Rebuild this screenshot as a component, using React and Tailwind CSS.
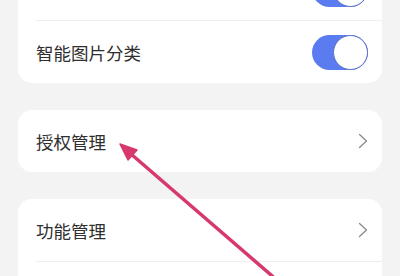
import React from "react";

function Toggle() {
  return (
    <div className="relative w-[56px] h-[35px] rounded-full bg-[#5b7cf1]">
      <div className="absolute right-0 top-0 w-[35px] h-[35px] rounded-full bg-white border-[1.5px] border-[#5d6fc6]" />
    </div>
  );
}

function Chevron() {
  return (
    <svg width="10" height="16" viewBox="0 0 10 16" fill="none">
      <path d="M1.5 1.5 L8.5 8 L1.5 14.5" stroke="#8a8a8a" strokeWidth="1.3" strokeLinecap="round" strokeLinejoin="round" />
    </svg>
  );
}

function Row({ label, right }) {
  return (
    <div className="h-[62px] pl-[18px] pr-[14px] flex items-center justify-between">
      <span className="text-[17.5px] text-[#2f2f2f] tracking-[0px] pt-[3px]" style={{ fontFamily: '"Noto Sans CJK SC", "Noto Sans", sans-serif' }}>
        {label}
      </span>
      {right}
    </div>
  );
}

function Divider() {
  return <div className="ml-[18px] h-px bg-[#eeeeee]" />;
}

export default function App() {
  return (
    <div className="relative w-[400px] h-[276px] bg-[#f3f3f3] overflow-hidden">
      <div className="-mt-[42px] px-[18px] flex flex-col gap-[27px]">
        <div className="rounded-[14px] bg-white">
          <Row label="智能文字识别" right={<Toggle />} />
          <Divider />
          <Row label="智能图片分类" right={<Toggle />} />
        </div>
        <div className="rounded-[14px] bg-white">
          <Row label="授权管理" right={<Chevron />} />
        </div>
        <div className="rounded-[14px] bg-white">
          <Row label="功能管理" right={<Chevron />} />
          <Divider />
          <Row label="隐私设置" right={<Chevron />} />
        </div>
      </div>
      <svg className="absolute inset-0" width="400" height="276" viewBox="0 0 400 276">
        <line x1="131" y1="154" x2="278" y2="281" stroke="#d6386f" strokeWidth="3.5" strokeLinecap="round" />
        <polygon points="120,144 128,160 137,150" fill="#d6386f" stroke="#d6386f" strokeWidth="1.5" strokeLinejoin="round" />
      </svg>
    </div>
  );
}
